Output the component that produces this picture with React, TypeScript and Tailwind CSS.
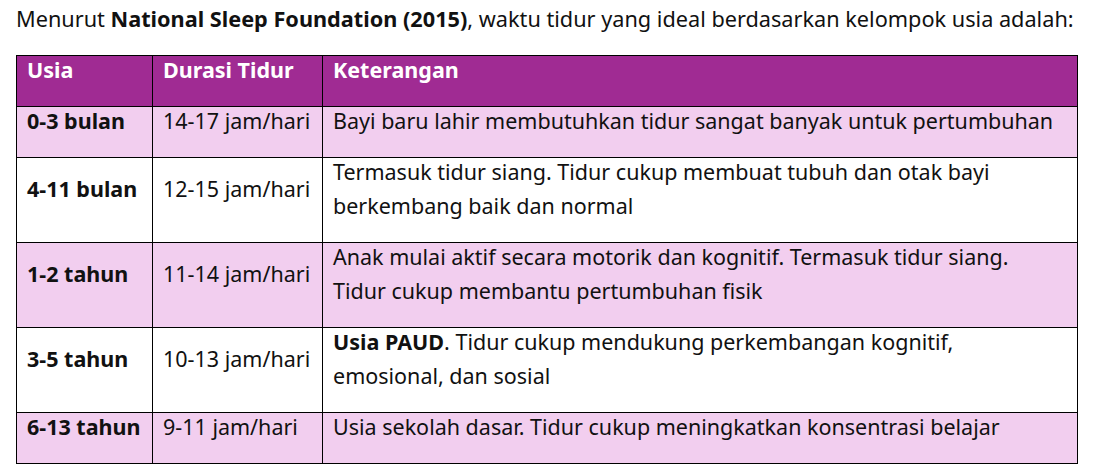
const rows: {
  age: string;
  duration: string;
  note: React.ReactNode;
  pink: boolean;
}[] = [
  {
    age: "0-3 bulan",
    duration: "14-17 jam/hari",
    note: "Bayi baru lahir membutuhkan tidur sangat banyak untuk pertumbuhan",
    pink: true,
  },
  {
    age: "4-11 bulan",
    duration: "12-15 jam/hari",
    note: (
      <>
        Termasuk tidur siang. Tidur cukup membuat tubuh dan otak bayi
        <br />
        berkembang baik dan normal
      </>
    ),
    pink: false,
  },
  {
    age: "1-2 tahun",
    duration: "11-14 jam/hari",
    note: (
      <>
        Anak mulai aktif secara motorik dan kognitif. Termasuk tidur siang.
        <br />
        Tidur cukup membantu pertumbuhan fisik
      </>
    ),
    pink: true,
  },
  {
    age: "3-5 tahun",
    duration: "10-13 jam/hari",
    note: (
      <>
        <b className="font-bold">Usia PAUD</b>. Tidur cukup mendukung
        perkembangan kognitif,
        <br />
        emosional, dan sosial
      </>
    ),
    pink: false,
  },
  {
    age: "6-13 tahun",
    duration: "9-11 jam/hari",
    note: "Usia sekolah dasar. Tidur cukup meningkatkan konsentrasi belajar",
    pink: true,
  },
];

const cell = "border border-black px-[10px] pt-0 pb-[19px] whitespace-nowrap";

export default function App() {
  return (
    <div
      className="w-[1096px] h-[476px] bg-white text-[#111] px-[16px]"
      style={{ fontFamily: "'Noto Sans', 'Open Sans', sans-serif" }}
    >
      <p className="pt-[4px] h-[55px] text-[21.7px] leading-[30px] whitespace-nowrap">
        Menurut <b className="font-bold">National Sleep Foundation (2015)</b>,
        waktu tidur yang ideal berdasarkan kelompok usia adalah:
      </p>
      <table className="w-[1062px] border-collapse text-[21.5px] leading-[34px] table-fixed">
        <colgroup>
          <col className="w-[136px]" />
          <col className="w-[170px]" />
          <col />
        </colgroup>
        <thead>
          <tr className="bg-[#a02b93] text-white">
            <th className={`${cell} text-left align-top font-bold`}>
              <div className="-mt-[3px]">Usia</div>
            </th>
            <th className={`${cell} text-left align-top font-bold`}>
              <div className="-mt-[3px]">Durasi Tidur</div>
            </th>
            <th className={`${cell} text-left align-top font-bold`}>
              <div className="-mt-[3px]">Keterangan</div>
            </th>
          </tr>
        </thead>
        <tbody>
          {rows.map((r) => (
            <tr key={r.age} className={r.pink ? "bg-[#f2ceef]" : "bg-white"}>
              <td className={`${cell} align-middle font-bold`}>
                <div className="-mt-[3px]">{r.age}</div>
              </td>
              <td className={`${cell} align-middle`}>
                <div className="-mt-[3px]">{r.duration}</div>
              </td>
              <td className={`${cell} align-top`}>
                <div className="-mt-[3px]">{r.note}</div>
              </td>
            </tr>
          ))}
        </tbody>
      </table>
    </div>
  );
}
